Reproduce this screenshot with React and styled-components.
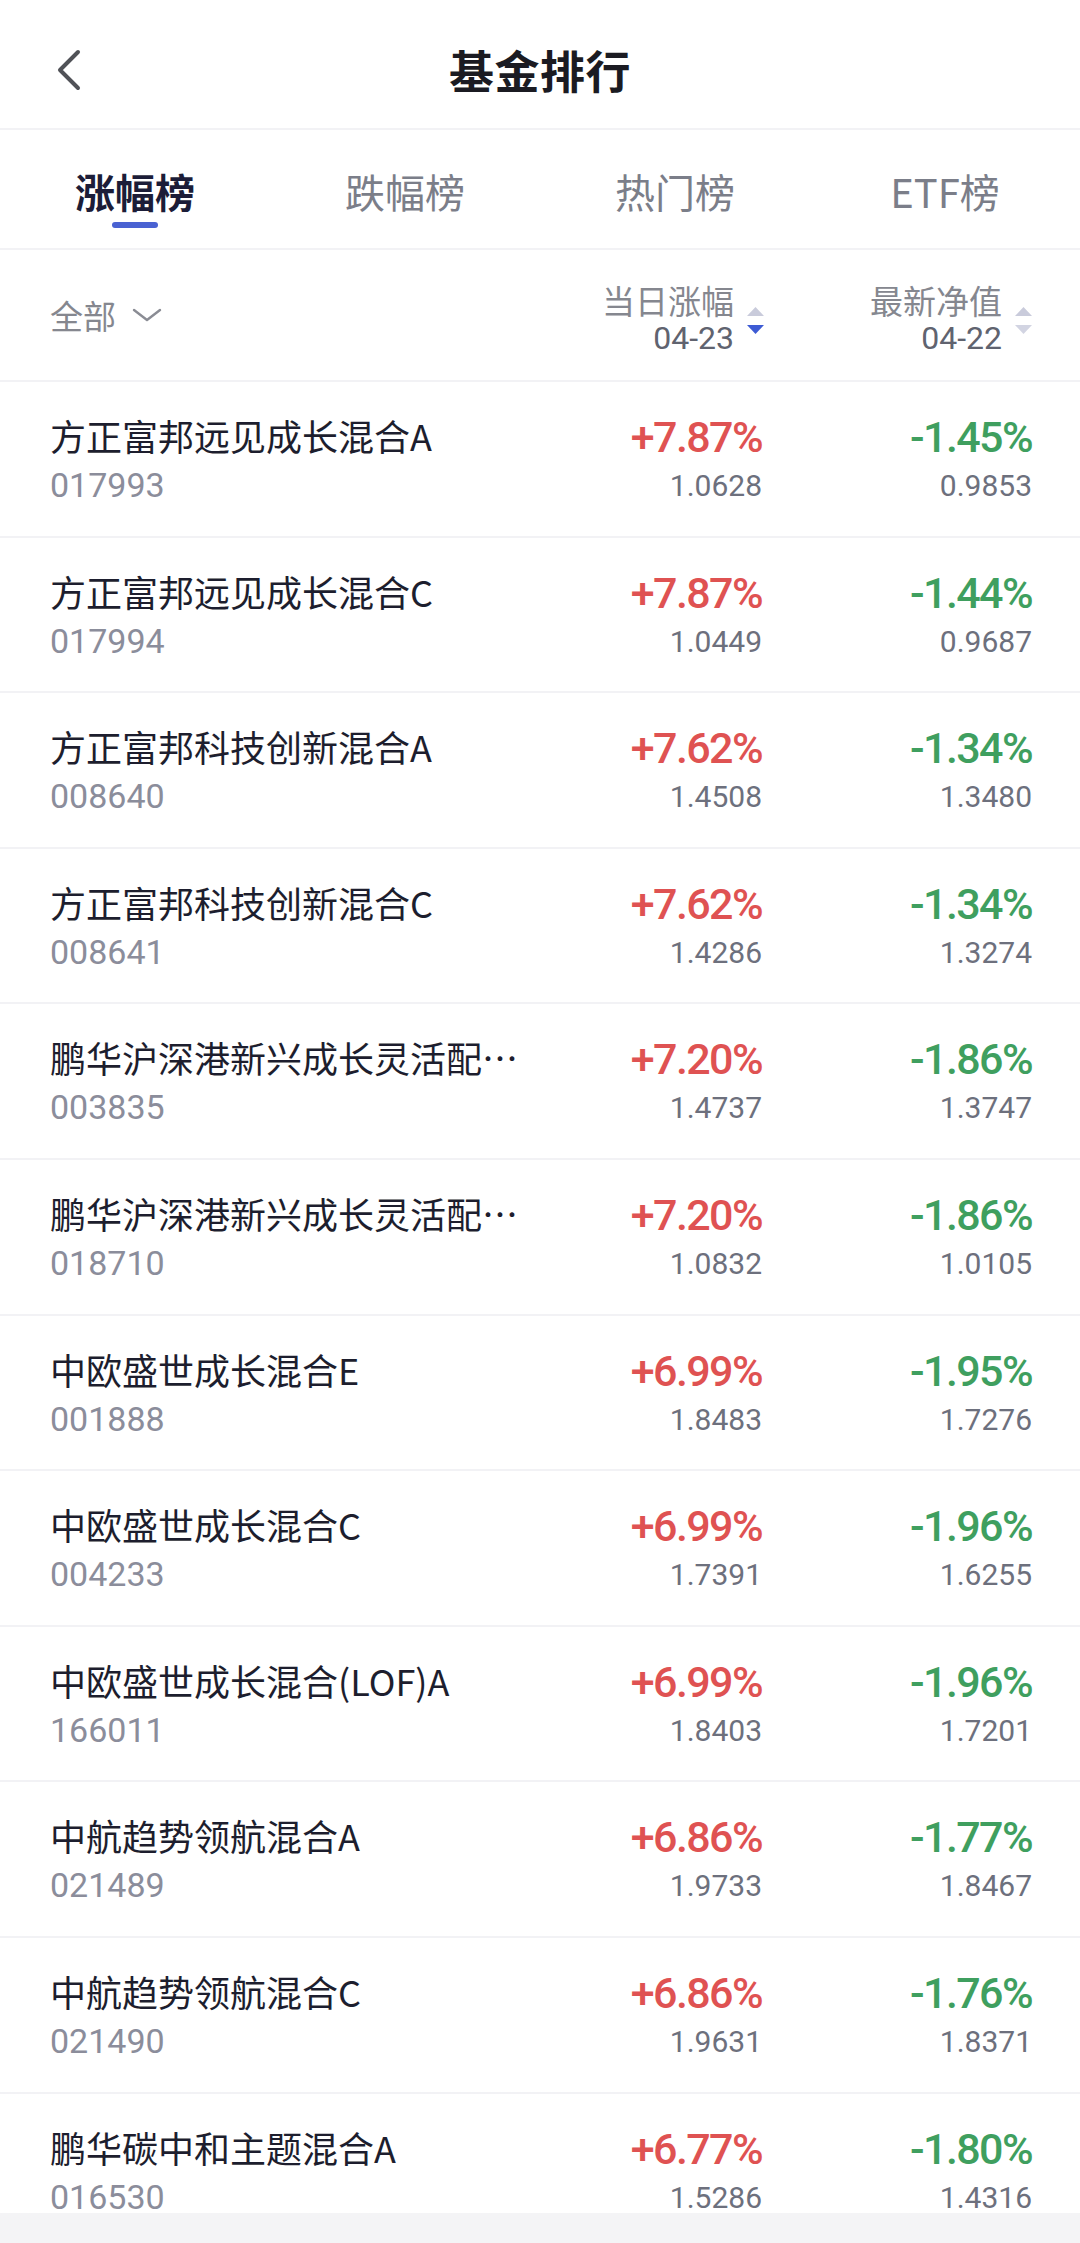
import React, { useState } from 'react'
import styled, { createGlobalStyle } from 'styled-components'

const GlobalStyle = createGlobalStyle`
  body {
    margin: 0;
    background: #ffffff;
    font-family: "Noto Sans CJK SC", "Noto Sans", sans-serif;
  }
`

const Page = styled.div`
  width: 1080px;
  height: 2243px;
  display: flex;
  flex-direction: column;
  overflow: hidden;
  background: #fff;
`

const NavBar = styled.div`
  height: 130px;
  box-sizing: border-box;
  padding-top: 12px;
  border-bottom: 2px solid #f2f2f5;
  display: grid;
  grid-template-columns: 1fr auto 1fr;
  align-items: center;
`

const BackBtn = styled.div`
  padding-left: 56px;
  display: flex;
  align-items: center;
  height: 48px;
`

const Title = styled.div`
  font-size: 45px;
  line-height: 64px;
  font-weight: 700;
  color: #1b1b22;
  letter-spacing: 0.5px;
`

const TabBar = styled.div`
  height: 120px;
  box-sizing: border-box;
  border-bottom: 2px solid #f2f2f5;
  display: grid;
  grid-template-columns: repeat(4, 1fr);
`

const Tab = styled.div`
  display: flex;
  flex-direction: column;
  align-items: center;
  padding-top: 32px;
  font-size: 40px;
  line-height: 58px;
  font-weight: ${(p) => (p.active ? 700 : 400)};
  color: ${(p) => (p.active ? '#1c1d38' : '#7b7e89')};
  cursor: pointer;
`

const TabLine = styled.div`
  width: 46px;
  height: 6px;
  margin-top: 2px;
  border-radius: 3px;
  background: ${(p) => (p.active ? '#4a62d2' : 'transparent')};
`

const Grid = styled.div`
  display: grid;
  grid-template-columns: 1fr 240px 268px;
  padding: 0 48px 0 50px;
  box-sizing: border-box;
`

const ColumnHead = styled(Grid)`
  height: 132px;
  border-bottom: 2px solid #f2f2f5;
`

const Filter = styled.div`
  display: flex;
  align-items: center;
  align-self: center;
  font-size: 33px;
  line-height: 48px;
  color: #85878f;
  gap: 16px;
`

const HeadCell = styled.div`
  display: flex;
  justify-content: flex-end;
  align-items: flex-start;
  padding-top: 31px;
`

const HeadText = styled.div`
  text-align: right;
  font-size: 33px;
  line-height: 38px;
  color: #85878f;
`

const HeadDate = styled.div`
  font-family: Roboto, "Noto Sans", sans-serif;
  font-size: 32px;
  color: #60636f;
`

const SortIcon = styled.svg`
  margin-left: 13px;
  margin-top: 26px;
  flex-shrink: 0;
`

const List = styled.div`
  flex: 1;
  overflow: hidden;
`

const Row = styled(Grid)`
  height: 155.6px;
  border-bottom: 2px solid #f2f2f5;
  align-items: start;
`

const NameCell = styled.div`
  min-width: 0;
  padding-top: 27px;
`

const FundName = styled.div`
  font-size: 36px;
  line-height: 53px;
  color: #1d1e2e;
  white-space: nowrap;
  overflow: hidden;
  text-overflow: ellipsis;
`

const Code = styled.div`
  font-family: Roboto, "Noto Sans", sans-serif;
  font-size: 34px;
  line-height: 40px;
  margin-top: 3px;
  color: #8b8d9b;
`

const ValueCell = styled.div`
  text-align: right;
  padding-top: 30px;
  padding-right: ${(p) => p.pad || 0}px;
`

const Percent = styled.div`
  font-family: Roboto, "Noto Sans", sans-serif;
  font-size: 43px;
  line-height: 50px;
  font-weight: 500;
  letter-spacing: -1.6px;
  color: ${(p) => (p.up ? '#df5252' : '#3f9f5f')};
`

const SubValue = styled.div`
  font-family: Roboto, "Noto Sans", sans-serif;
  font-size: 30px;
  line-height: 40px;
  margin-top: 4px;
  color: #6d707d;
`

const Footer = styled.div`
  height: 30px;
  background: #f4f4f6;
`

const funds = [
  ['方正富邦远见成长混合A', '017993', '+7.87%', '1.0628', '-1.45%', '0.9853'],
  ['方正富邦远见成长混合C', '017994', '+7.87%', '1.0449', '-1.44%', '0.9687'],
  ['方正富邦科技创新混合A', '008640', '+7.62%', '1.4508', '-1.34%', '1.3480'],
  ['方正富邦科技创新混合C', '008641', '+7.62%', '1.4286', '-1.34%', '1.3274'],
  ['鹏华沪深港新兴成长灵活配置混合', '003835', '+7.20%', '1.4737', '-1.86%', '1.3747'],
  ['鹏华沪深港新兴成长灵活配置混合', '018710', '+7.20%', '1.0832', '-1.86%', '1.0105'],
  ['中欧盛世成长混合E', '001888', '+6.99%', '1.8483', '-1.95%', '1.7276'],
  ['中欧盛世成长混合C', '004233', '+6.99%', '1.7391', '-1.96%', '1.6255'],
  ['中欧盛世成长混合(LOF)A', '166011', '+6.99%', '1.8403', '-1.96%', '1.7201'],
  ['中航趋势领航混合A', '021489', '+6.86%', '1.9733', '-1.77%', '1.8467'],
  ['中航趋势领航混合C', '021490', '+6.86%', '1.9631', '-1.76%', '1.8371'],
  ['鹏华碳中和主题混合A', '016530', '+6.77%', '1.5286', '-1.80%', '1.4316'],
]

const tabs = ['涨幅榜', '跌幅榜', '热门榜', 'ETF榜']

function Sort({ down }) {
  return (
    <SortIcon width="17" height="28" viewBox="0 0 17 28">
      <path d="M8.5 0 L17 9 L0 9 Z" fill="#c9cbdb" />
      <path d="M0 18 L17 18 L8.5 27 Z" fill={down ? '#3d5bd4' : '#d2d4e2'} />
    </SortIcon>
  )
}

export default function App() {
  const [active, setActive] = useState(0)

  return (
    <Page>
      <GlobalStyle />
      <NavBar>
        <BackBtn>
          <svg width="26" height="42" viewBox="0 0 26 42">
            <path d="M22 3 L4 21 L22 39" fill="none" stroke="#505257" strokeWidth="4" strokeLinecap="round" strokeLinejoin="round" />
          </svg>
        </BackBtn>
        <Title>基金排行</Title>
        <div />
      </NavBar>

      <TabBar>
        {tabs.map((t, i) => (
          <Tab key={t} active={i === active} onClick={() => setActive(i)}>
            {t}
            <TabLine active={i === active} />
          </Tab>
        ))}
      </TabBar>

      <ColumnHead>
        <Filter>
          全部
          <svg width="30" height="14" viewBox="0 0 30 14">
            <path d="M2 2 L15 12 L28 2" fill="none" stroke="#8a8c94" strokeWidth="2.4" strokeLinecap="round" strokeLinejoin="round" />
          </svg>
        </Filter>
        <HeadCell>
          <HeadText>
            当日涨幅
            <HeadDate>04-23</HeadDate>
          </HeadText>
          <Sort down />
        </HeadCell>
        <HeadCell>
          <HeadText>
            最新净值
            <HeadDate>04-22</HeadDate>
          </HeadText>
          <Sort />
        </HeadCell>
      </ColumnHead>

      <List>
        {funds.map((f) => (
          <Row key={f[1]}>
            <NameCell>
              <FundName>{f[0]}</FundName>
              <Code>{f[1]}</Code>
            </NameCell>
            <ValueCell pad={2}>
              <Percent up>{f[2]}</Percent>
              <SubValue>{f[3]}</SubValue>
            </ValueCell>
            <ValueCell>
              <Percent>{f[4]}</Percent>
              <SubValue>{f[5]}</SubValue>
            </ValueCell>
          </Row>
        ))}
      </List>
      <Footer />
    </Page>
  )
}
